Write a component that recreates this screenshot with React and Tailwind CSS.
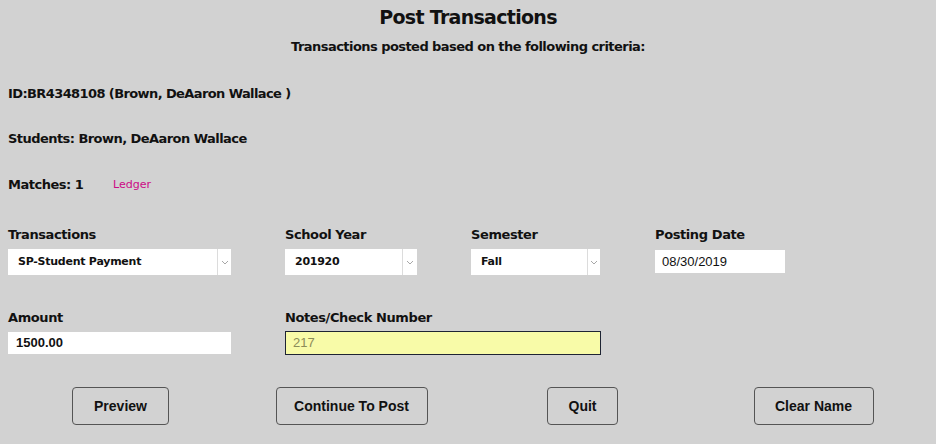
import React from "react";

const F = { fontFamily: '"DejaVu Sans", sans-serif' };
const A = { fontFamily: '"Liberation Sans", Arial, sans-serif' };

function Chevron() {
  return (
    <svg width="8" height="5" viewBox="0 0 8 5" className="block">
      <path d="M1 1 L4 4 L7 1" fill="none" stroke="#a8a8a8" strokeWidth="1" />
    </svg>
  );
}

function Select({ value, w, sep }) {
  return (
    <div className={`flex h-[26px] bg-white ${w}`}>
      <div className="flex flex-1 items-center pl-[10px] pt-[1px] text-[11px] font-bold tracking-[-0.25px] text-[#111]" style={F}>
        {value}
      </div>
      <div className={`flex ${sep} items-center justify-center border-l border-[#dcdcdc]`}>
        <Chevron />
      </div>
    </div>
  );
}

function Label({ children }) {
  return (
    <div className="h-[18px] text-[13px] font-bold leading-[18px] tracking-[-0.4px] text-[#111]" style={F}>
      {children}
    </div>
  );
}

function Btn({ children, w }) {
  return (
    <div className="flex justify-center">
      <button
        className={`h-[38px] ${w} rounded-[4px] border border-[#555] bg-[#d2d2d2] text-[14px] font-bold text-[#111]`}
        style={A}
      >
        {children}
      </button>
    </div>
  );
}

export default function App() {
  return (
    <div className="h-[444px] w-[936px] overflow-hidden bg-[#d2d2d2] text-[#111]">
      <div className="pt-[5px] text-center text-[19px] font-bold leading-[24px] tracking-[-0.7px]" style={F}>
        Post Transactions
      </div>
      <div className="mt-[10px] text-center text-[13px] font-bold leading-[16px] tracking-[-0.55px]" style={F}>
        Transactions posted based on the following criteria:
      </div>
      <div className="pl-[8px]">
        <div className="mt-[30px] h-[18px] text-[13px] font-bold leading-[18px] tracking-[-0.6px]" style={F}>
          ID:BR4348108 (Brown, DeAaron Wallace )
        </div>
        <div className="mt-[27px] h-[18px] text-[13px] font-bold leading-[18px] tracking-[-0.55px]" style={F}>
          Students: Brown, DeAaron Wallace
        </div>
        <div className="mt-[28px] flex h-[18px] items-center">
          <span className="w-[105px] text-[13px] font-bold tracking-[-0.5px]" style={F}>
            Matches: 1
          </span>
          <span className="text-[11px] text-[#cc0a85]" style={F}>
            Ledger
          </span>
        </div>

        <div className="mt-[32px] flex">
          <div className="w-[277px]">
            <Label>Transactions</Label>
            <div className="mt-[5px]">
              <Select value="SP-Student Payment" w="w-[223px]" sep="w-[14px]" />
            </div>
          </div>
          <div className="w-[186px]">
            <Label>School Year</Label>
            <div className="mt-[5px]">
              <Select value="201920" w="w-[132px]" sep="w-[15px]" />
            </div>
          </div>
          <div className="w-[184px]">
            <Label>Semester</Label>
            <div className="mt-[5px]">
              <Select value="Fall" w="w-[129px]" sep="w-[13px]" />
            </div>
          </div>
          <div>
            <Label>Posting Date</Label>
            <div className="mt-[6px] flex h-[23px] w-[130px] items-center bg-white pl-[7px] text-[13px] text-[#111]" style={A}>
              08/30/2019
            </div>
          </div>
        </div>

        <div className="mt-[34px] flex">
          <div className="w-[277px]">
            <Label>Amount</Label>
            <div className="mt-[5px] flex h-[22px] w-[223px] items-center bg-white pl-[8px] text-[13px] font-bold text-[#111]" style={A}>
              1500.00
            </div>
          </div>
          <div>
            <Label>Notes/Check Number</Label>
            <div className="mt-[4px] flex h-[24px] w-[316px] items-center border border-[#1e2433] bg-[#f8fba8] pl-[7px] text-[13px] text-[#8c8c58]" style={A}>
              217
            </div>
          </div>
        </div>
      </div>

      <div className="ml-[5px] mt-[32px] grid w-[924px] grid-cols-4">
        <Btn w="w-[97px]">Preview</Btn>
        <Btn w="w-[152px]">Continue To Post</Btn>
        <Btn w="w-[71px]">Quit</Btn>
        <Btn w="w-[120px]">Clear Name</Btn>
      </div>
    </div>
  );
}
